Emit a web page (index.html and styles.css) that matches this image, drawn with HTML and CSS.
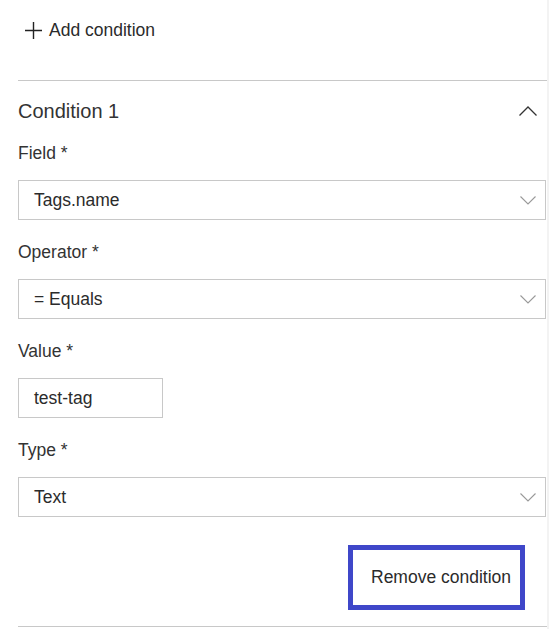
FILE: index.html
```html
<!DOCTYPE html>
<html lang="en">
<head>
<meta charset="utf-8">
<title>Conditions</title>
<link rel="stylesheet" href="styles.css">
</head>
<body>
<div class="panel">
  <div class="add-row">
    <button class="add-btn" type="button">
      <svg class="plus" width="17" height="17" viewBox="0 0 17 17" aria-hidden="true"><path d="M8.5 0v17M0 8.5h17" stroke="#222" stroke-width="1.4" fill="none"/></svg>
      <span>Add condition</span>
    </button>
  </div>
  <div class="divider"></div>
  <div class="cond-header">
    <h2 class="cond-title">Condition 1</h2>
    <svg class="chev-up" width="18" height="10" viewBox="0 0 18 10" aria-hidden="true"><path d="M0.5 9.5L9 1l8.5 8.5" stroke="#333" stroke-width="1.3" fill="none"/></svg>
  </div>
  <div class="field">
    <div class="label">Field *</div>
    <div class="select"><span>Tags.name</span><svg class="chev-down" width="16" height="9" viewBox="0 0 16 9" aria-hidden="true"><path d="M0.5 0.5L8 8l7.5-7.5" stroke="#999" stroke-width="1.1" fill="none"/></svg></div>
  </div>
  <div class="field">
    <div class="label">Operator *</div>
    <div class="select"><span>= Equals</span><svg class="chev-down" width="16" height="9" viewBox="0 0 16 9" aria-hidden="true"><path d="M0.5 0.5L8 8l7.5-7.5" stroke="#999" stroke-width="1.1" fill="none"/></svg></div>
  </div>
  <div class="field">
    <div class="label">Value *</div>
    <div class="input"><span>test-tag</span></div>
  </div>
  <div class="field">
    <div class="label">Type *</div>
    <div class="select"><span>Text</span><svg class="chev-down" width="16" height="9" viewBox="0 0 16 9" aria-hidden="true"><path d="M0.5 0.5L8 8l7.5-7.5" stroke="#999" stroke-width="1.1" fill="none"/></svg></div>
  </div>
  <div class="actions">
    <button class="remove-btn" type="button">Remove condition</button>
  </div>
  <div class="divider bottom"></div>
</div>
</body>
</html>
```
FILE: styles.css
```css
html {
  background: #f3f3f3;
}
body {
  margin: 0;
  width: 547px;
  min-height: 629px;
  background: #fff;
  font-family: "Liberation Sans", Arial, sans-serif;
  color: #333;
}
.panel {
  padding-left: 18px;
}
.add-row {
  height: 60px;
  display: flex;
  align-items: center;
}
.add-btn {
  display: flex;
  align-items: center;
  gap: 7px;
  margin-left: 7px;
  padding: 0;
  border: 0;
  background: none;
  font: inherit;
  font-size: 17.5px;
  color: #2b2b2b;
}
.plus {
  display: block;
}
.divider {
  height: 1px;
  background: #c8c8c8;
  margin-top: 20px;
}
.cond-header {
  display: flex;
  align-items: center;
  justify-content: space-between;
  height: 30px;
  margin-top: 15px;
  padding-right: 10px;
}
.cond-title {
  margin: 0;
  font-weight: normal;
  font-size: 20px;
  color: #333;
}
.chev-up {
  display: block;
}
.field {
  margin-top: 16px;
}
.field + .field {
  margin-top: 21px;
}
.label {
  height: 22px;
  line-height: 22px;
  font-size: 17.5px;
  margin-bottom: 16px;
}
.select, .input {
  box-sizing: border-box;
  height: 40px;
  border: 1px solid #c8c8c8;
  display: flex;
  align-items: center;
  justify-content: space-between;
  padding: 1px 9px 0 15px;
  font-size: 17.5px;
  color: #2b2b2b;
}
.select {
  width: 528px;
}
.input {
  width: 145px;
}
.chev-down {
  display: block;
}
.actions {
  display: flex;
  justify-content: flex-end;
  margin-top: 28px;
  padding-right: 22px;
}
.remove-btn {
  box-sizing: border-box;
  width: 177px;
  height: 65px;
  border: 5px solid #3f47c9;
  background: #fff;
  font: inherit;
  font-size: 17.5px;
  color: #2b2b2b;
  text-align: left;
  padding: 0 0 0 18px;
}
.divider.bottom {
  margin-top: 16px;
}
```
